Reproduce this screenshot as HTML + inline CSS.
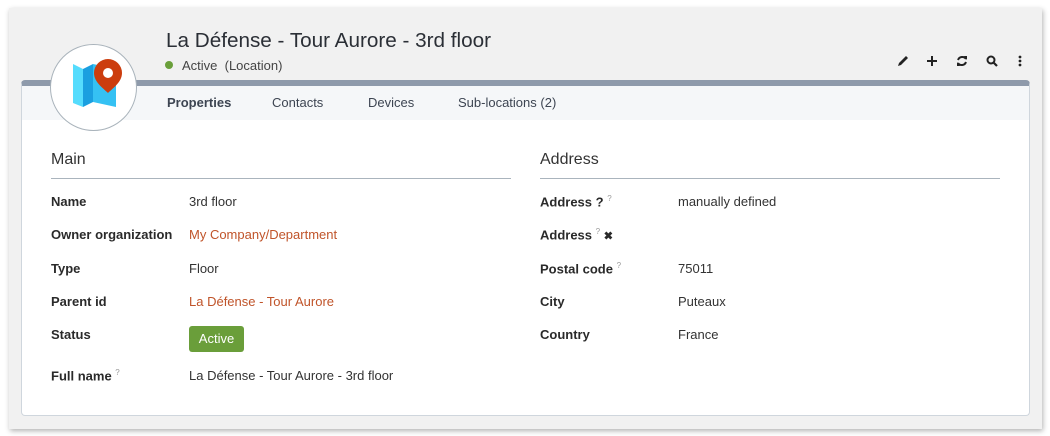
<!DOCTYPE html>
<html><head><meta charset="utf-8"><style>
*{box-sizing:border-box;margin:0;padding:0}
body{width:1050px;height:436px;background:#fff;font-family:"Liberation Sans",sans-serif;color:#333;position:relative;overflow:hidden}
.panel{position:absolute;left:9px;top:8px;width:1033px;height:421px;background:#f1f1f1;box-shadow:1px 2px 5px rgba(0,0,0,.3)}
.card{position:absolute;left:21px;top:80px;width:1009px;height:336px;background:#fff;border:1px solid #cfd6dd;border-top:6px solid #8e9aab;border-radius:4px}
.tabs{position:absolute;left:0;top:0;width:100%;height:34px;background:#f5f7f9}
.tab{position:absolute;top:9px;font-size:13px;color:#3d4552}
.circle{position:absolute;left:50px;top:44px;width:87px;height:87px;border-radius:50%;background:#fff;border:1px solid #a9b3bb}
.title{position:absolute;left:166px;top:29px;font-size:20.7px;color:#2b2f36}
.sub{position:absolute;left:182px;top:58px;font-size:13px;color:#444}
.dot{position:absolute;left:165px;top:61px;width:8px;height:8px;border-radius:50%;background:#6a9f3a}
.h{position:absolute;top:151px;font-size:16px;color:#333}
.hr{position:absolute;top:178px;height:1px;background:#aab4bd}
.l{position:absolute;font-size:13px;font-weight:bold;color:#2a2a2a}
.v{position:absolute;font-size:13px;color:#333}
.a{color:#c0542a}
sup{font-size:8px;color:#999;font-weight:normal}
.badge{position:absolute;left:189px;top:326px;width:55px;height:26px;background:#6a9e3a;border-radius:3px;color:#fff;font-size:13px;text-align:center;line-height:26px}
.ic{position:absolute;top:54px}
</style></head><body>
<div class="panel"></div>
<div class="card"><div class="tabs">
<div class="tab" style="left:145px;font-weight:bold">Properties</div>
<div class="tab" style="left:250px">Contacts</div>
<div class="tab" style="left:346px">Devices</div>
<div class="tab" style="left:436px">Sub-locations (2)</div>
</div></div>
<div class="circle"><svg width="87" height="87" viewBox="0 0 87 87">
<polygon points="22,19 32,24 32,62 22,58" fill="#55dcfd"/>
<polygon points="32,24 42,19 42,57 32,62" fill="#1a9fe0"/>
<polygon points="42,19 65,24 65,62 42,57" fill="#35c1f3"/>
<path d="M57,14 a14,14 0 0 1 14,14 c0,9 -9,15 -14,20 c-5,-5 -14,-11 -14,-20 a14,14 0 0 1 14,-14z" fill="#cc3d0e"/>
<circle cx="57" cy="28" r="5" fill="#fff"/>
</svg></div>
<div class="title">La Défense - Tour Aurore - 3rd floor</div>
<div class="dot"></div><div class="sub">Active &nbsp;(Location)</div>
<svg class="ic" style="left:896px" width="14" height="14" viewBox="0 0 14 14"><path d="M2,12 L3,9 L10,2 L12,4 L5,11z" fill="#222"/></svg>
<svg class="ic" style="left:925px" width="14" height="14" viewBox="0 0 14 14"><path d="M7,2V12M2,7H12" stroke="#222" stroke-width="2"/></svg>
<svg class="ic" style="left:955px" width="14" height="14" viewBox="0 0 14 14"><path d="M3,6 A4.5,4.5 0 0 1 11,5 M11,8 A4.5,4.5 0 0 1 3,9" stroke="#222" stroke-width="2" fill="none"/><path d="M9,2 L12,2 L12,6z M5,12 L2,12 L2,8z" fill="#222"/></svg>
<svg class="ic" style="left:985px" width="14" height="14" viewBox="0 0 14 14"><circle cx="6" cy="6" r="3.5" stroke="#222" stroke-width="2" fill="none"/><path d="M8.5,8.5 L12,12" stroke="#222" stroke-width="2.2"/></svg>
<svg class="ic" style="left:1013px" width="14" height="14" viewBox="0 0 14 14"><circle cx="7" cy="3" r="1.4" fill="#222"/><circle cx="7" cy="7" r="1.4" fill="#222"/><circle cx="7" cy="11" r="1.4" fill="#222"/></svg>

<div class="h" style="left:51px">Main</div><div class="hr" style="left:51px;width:460px"></div>
<div class="h" style="left:540px">Address</div><div class="hr" style="left:540px;width:460px"></div>

<div class="l" style="left:51px;top:194px">Name</div><div class="v" style="left:189px;top:194px">3rd floor</div>
<div class="l" style="left:51px;top:227px">Owner organization</div><div class="v a" style="left:189px;top:227px">My Company/Department</div>
<div class="l" style="left:51px;top:261px">Type</div><div class="v" style="left:189px;top:261px">Floor</div>
<div class="l" style="left:51px;top:294px">Parent id</div><div class="v a" style="left:189px;top:294px">La Défense - Tour Aurore</div>
<div class="l" style="left:51px;top:327px">Status</div><div class="badge">Active</div>
<div class="l" style="left:51px;top:368px">Full name <sup>?</sup></div><div class="v" style="left:189px;top:368px">La Défense - Tour Aurore - 3rd floor</div>

<div class="l" style="left:540px;top:194px">Address ? <sup>?</sup></div><div class="v" style="left:678px;top:194px">manually defined</div>
<div class="l" style="left:540px;top:227px">Address <sup>?</sup> <span style="font-size:11px">✖</span></div>
<div class="l" style="left:540px;top:261px">Postal code <sup>?</sup></div><div class="v" style="left:678px;top:261px">75011</div>
<div class="l" style="left:540px;top:294px">City</div><div class="v" style="left:678px;top:294px">Puteaux</div>
<div class="l" style="left:540px;top:327px">Country</div><div class="v" style="left:678px;top:327px">France</div>
</body></html>
